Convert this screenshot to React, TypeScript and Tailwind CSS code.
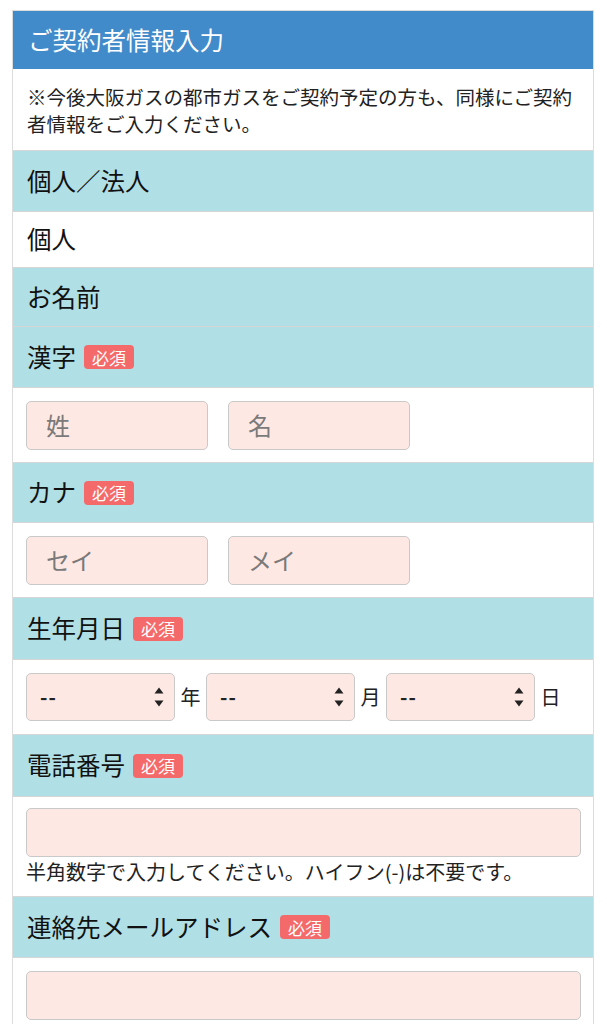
import React from 'react'

const font = { fontFamily: '"Noto Sans CJK JP", "Noto Sans", sans-serif' }

const Badge: React.FC = () => (
  <span className="ml-[8px] inline-flex h-[24px] w-[50px] items-center justify-center rounded-[4px] bg-[#f46a6a] text-[17px] leading-none text-white">
    必須
  </span>
)

const LabelRow: React.FC<{ label: string; required?: boolean; h: string }> = ({ label, required, h }) => (
  <div className={`flex items-center border-b border-[#d6d6d6] bg-[#b0dfe5] pl-[14px] text-[24.5px] text-[#111] ${h}`}>
    <span>{label}</span>
    {required && <Badge />}
  </div>
)

const TextBox: React.FC<{ placeholder?: string; className?: string }> = ({ placeholder, className }) => (
  <div className={`flex h-[49px] items-center rounded-[5px] border border-[#c9c9c9] bg-[#fee8e4] pl-[19px] text-[24px] text-[#7a7a7a] ${className ?? ''}`}>
    {placeholder}
  </div>
)

const Picker: React.FC = () => (
  <div className="flex h-[48px] w-[149px] items-center justify-between rounded-[5px] border border-[#c9c9c9] bg-[#fee8e4] pl-[13px] pr-[10px]">
    <span className="text-[20px] font-bold leading-none tracking-[1px] text-[#222]">--</span>
    <svg width="10" height="24" viewBox="0 0 10 24">
      <path d="M5 2.5 L9.5 8.5 L0.5 8.5 Z" fill="#222" />
      <path d="M0.5 15.5 L9.5 15.5 L5 21.5 Z" fill="#222" />
    </svg>
  </div>
)

export default function App() {
  return (
    <div className="bg-white pt-[10px]" style={font}>
      <div className="ml-[12px] w-[582px] border border-b-0 border-[#dcdcdc]">
        <div className="flex h-[58px] items-center bg-[#428bca] pl-[15px] text-[24.5px] text-white">
          ご契約者情報入力
        </div>
        <div className="flex h-[82px] items-center border-b border-[#d6d6d6] px-[14px] text-[19.5px] leading-[27px] text-[#222]">
          <p>※今後大阪ガスの都市ガスをご契約予定の方も、同様にご契約者情報をご入力ください。</p>
        </div>

        <LabelRow label="個人／法人" h="h-[61px]" />
        <div className="flex h-[56px] items-center border-b border-[#d6d6d6] pl-[14px] text-[24.5px] text-[#111]">
          個人
        </div>

        <LabelRow label="お名前" h="h-[59px]" />
        <LabelRow label="漢字" required h="h-[61px]" />
        <div className="flex h-[75px] items-center gap-[20px] border-b border-[#d6d6d6] pl-[13px]">
          <TextBox placeholder="姓" className="w-[182px]" />
          <TextBox placeholder="名" className="w-[182px]" />
        </div>

        <LabelRow label="カナ" required h="h-[60px]" />
        <div className="flex h-[75px] items-center gap-[20px] border-b border-[#d6d6d6] pl-[13px]">
          <TextBox placeholder="セイ" className="w-[182px]" />
          <TextBox placeholder="メイ" className="w-[182px]" />
        </div>

        <LabelRow label="生年月日" required h="h-[62px]" />
        <div className="flex h-[75px] items-center border-b border-[#d6d6d6] pl-[13px] text-[20px] text-[#222]">
          <Picker />
          <span className="w-[31px] text-center">年</span>
          <Picker />
          <span className="w-[31px] text-center">月</span>
          <Picker />
          <span className="w-[31px] text-center">日</span>
        </div>

        <LabelRow label="電話番号" required h="h-[62px]" />
        <div className="flex h-[100px] flex-col border-b border-[#d6d6d6] px-[13px] pt-[11px]">
          <TextBox className="w-[555px]" />
          <p className="mt-[2px] text-[20px] leading-[26px] text-[#222]">
            半角数字で入力してください。ハイフン(-)は不要です。
          </p>
        </div>

        <LabelRow label="連絡先メールアドレス" required h="h-[61px]" />
        <div className="h-[80px] px-[13px] pt-[13px]">
          <TextBox className="w-[555px]" />
        </div>
      </div>
    </div>
  )
}
